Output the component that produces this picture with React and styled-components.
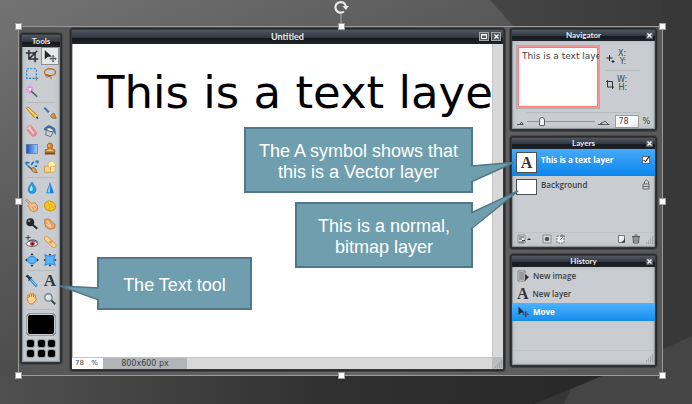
import React from "react";
import styled, { createGlobalStyle, css } from "styled-components";

const GlobalStyle = createGlobalStyle`
  *, *::before, *::after { box-sizing: border-box; }
  body { margin: 0; background: #484848; }
  button, input { font: inherit; color: inherit; margin: 0; padding: 0; border: 0; background: none; border-radius: 0; }
  svg { display: block; }
`;

const Slide = styled.main`
  position: relative;
  min-height: 100vh;
  padding: 26px 29px 28px 18px;
  overflow: hidden;
  background: linear-gradient(155deg, #737373 0%, #585858 35%, #3d3d3d 75%, #303030 100%);
  font-family: "Open Sans", "Noto Sans", sans-serif;
  font-size: 8px;
  line-height: 10px;
  color: #3c3f42;
`;

const Backdrop = styled.svg`
  position: absolute;
  inset: 0;
  width: 100%;
  height: 100%;
`;

const Selection = styled.section`
  position: relative;
  display: flex;
  align-items: flex-start;
  min-height: 350px;
  padding: 1px 5px 3px 0;
  border: 1px solid #9b9b9b;
  background: linear-gradient(90deg, #555, #666 50%, #585858);
`;

const handlePlaces = {
  nw: css`left: -4px; top: -4px;`,
  n: css`left: calc(50% - 3px); top: -4px;`,
  ne: css`right: -4px; top: -4px;`,
  w: css`left: -4px; top: calc(50% - 3px);`,
  e: css`right: -4px; top: calc(50% - 3px);`,
  sw: css`left: -4px; bottom: -4px;`,
  s: css`left: calc(50% - 3px); bottom: -4px;`,
  se: css`right: -4px; bottom: -4px;`,
};

const Handle = styled.span`
  position: absolute;
  width: 7px;
  height: 7px;
  border: 1px solid #a0a0a0;
  background: #fff;
  ${(p) => handlePlaces[p.$place]}
`;

const RotateHandle = styled.svg`
  position: absolute;
  left: calc(50% - 8px);
  top: -28px;
`;

const Panel = styled.section`
  display: flex;
  flex-direction: column;
  border: 1px solid #2b2b2d;
  border-radius: 3px;
  padding: 1px;
  background: #37383a;
  box-shadow: 0 0 0 1px #46474a;
`;

const ToolsPanel = styled(Panel)`
  flex: 0 0 42px;
  margin: 5px 8px 0 1px;
`;

const EditorPanel = styled(Panel)`
  flex: 1;
  min-width: 0;
  min-height: 343px;
`;

const SidePanels = styled.aside`
  flex: 0 0 147px;
  min-width: 0;
  display: flex;
  flex-direction: column;
  gap: 5px;
  margin-left: 5px;
`;

const TitleBar = styled.header`
  display: flex;
  align-items: center;
  justify-content: center;
  position: relative;
  height: ${(p) => p.$height || 11}px;
  padding-bottom: 1px;
  flex: none;
  background: linear-gradient(#515861, #30363f 55%, #14181d 60%, #20252b);
`;

const Title = styled.h2`
  margin: 0;
  color: #e8eaec;
  font-family: Lato, "Open Sans", sans-serif;
  font-size: ${(p) => (p.$large ? 9 : 8)}px;
  font-weight: 700;
  line-height: 10px;
`;

const WindowButtons = styled.div`
  position: absolute;
  right: 2px;
  top: 2px;
  display: flex;
  gap: 2px;
`;

const WindowButton = styled.button`
  width: ${(p) => (p.$large ? 10 : 7)}px;
  height: ${(p) => (p.$large ? 9 : 7)}px;
  display: grid;
  place-items: center;
  background: #575b60;
  border: ${(p) => (p.$large ? "1px solid #a0a4a8" : "0")};
`;

const PanelBody = styled.div`
  flex: 1;
  display: flex;
  flex-direction: column;
  border: solid #8f9499;
  border-width: 0 1px 1px;
  background: #c9cdd1;
  box-shadow: inset 0 0 5px #aeb4b9;
`;

const ToolGrid = styled.div`
  display: grid;
  grid-template-columns: 18px 18px;
  grid-auto-rows: 18px;
  justify-content: center;
`;

const ToolButton = styled.button`
  display: grid;
  place-items: center;
  border: ${(p) => (p.$active ? "1px solid #8b8f93" : "0")};
  background: ${(p) => (p.$active ? "#e6e8ea" : "transparent")};
`;

const Divider = styled.hr`
  width: 80%;
  height: 1px;
  margin: 1px auto;
  border: 0;
  flex: none;
  background: #b7bbbf;
`;

const MainSwatch = styled.button`
  height: 23px;
  margin: 2px 3px 3px;
  border: 1px solid #999da1;
  border-radius: 4px;
  background: #000;
  box-shadow: inset 0 0 0 1px #c9cdd1;
`;

const SwatchGrid = styled.div`
  display: grid;
  grid-template-columns: repeat(3, 9px);
  grid-auto-rows: 9px;
  justify-content: space-between;
  row-gap: 1px;
  margin: 0 3px 3px;
`;

const Swatch = styled.button`
  border: 1px solid #9da1a5;
  border-radius: 3px;
  background: #000;
`;

const EditorBody = styled.div`
  flex: 1;
  display: grid;
  grid-template-columns: minmax(0, 1fr) 11px;
  grid-template-rows: minmax(0, 1fr) 12px;
  background: #d8d8d8;
`;

const Canvas = styled.div`
  overflow: hidden;
  padding: 21px 0 0 24px;
  background: #fff;
  border-left: 1px solid #b9b9b9;
  color: #000;
  font-family: "DejaVu Sans", Verdana, sans-serif;
  font-size: 45px;
  line-height: 56px;
  white-space: nowrap;
`;

const ScrollTrack = styled.div`
  border-left: 1px solid #c5c5c5;
`;

const StatusBar = styled.footer`
  display: flex;
  align-items: stretch;
  border-top: 1px solid #c4c4c4;
  font-family: "DejaVu Sans", sans-serif;
  font-size: 7px;
  line-height: 11px;
`;

const ZoomStatus = styled.label`
  width: 31px;
  display: flex;
  justify-content: space-between;
  padding: 0 5px 0 3px;
  background: #fff;
`;

const ZoomInput = styled.input`
  width: 13px;
`;

const SizeStatus = styled.span`
  width: 84px;
  text-align: center;
  font-size: 8px;
  background: #b2b5b8;
`;

const GripCorner = styled.div`
  display: flex;
  align-items: flex-end;
  justify-content: flex-end;
  background: #babdbf;
`;

const NavTop = styled.div`
  display: flex;
  gap: 6px;
  padding: 4px 14px 2px 3px;
`;

const NavPreview = styled.div`
  width: 84px;
  height: 64px;
  flex: none;
  overflow: hidden;
  border: 1px solid #a9adb0;
  background: #fff;
  box-shadow: inset 0 0 0 1px #f99a9a, inset 0 0 0 2px #f77;
  padding: 4px 0 0 5px;
  font-family: "DejaVu Sans", Verdana, sans-serif;
  font-size: 9px;
  line-height: 12px;
  white-space: nowrap;
`;

const PreviewText = styled.div`
  overflow: hidden;
`;

const Readouts = styled.div`
  flex: 1;
  padding-top: 5px;
`;

const Readout = styled.div`
  display: flex;
  align-items: center;
  gap: 3px;
  font-family: "DejaVu Sans", sans-serif;
  font-size: 8px;
  line-height: 8px;
  text-align: right;
`;

const ReadoutDivider = styled(Divider)`
  width: 100%;
  margin: 4px 0 5px;
`;

const NavZoom = styled.div`
  display: flex;
  align-items: center;
  gap: 3px;
  padding: 1px 4px 0;
  font-family: "DejaVu Sans", sans-serif;
`;

const Range = styled.input`
  appearance: none;
  flex: 1;
  min-width: 0;
  height: 12px;
  background: linear-gradient(#8f9497, #8f9497) center / 100% 1px no-repeat;
  &::-webkit-slider-thumb {
    appearance: none;
    width: 6px;
    height: 9px;
    border: 1px solid #5d6165;
    border-radius: 3px 3px 1px 1px;
    background: #eceeef;
  }
`;

const PercentInput = styled.input`
  width: 24px;
  height: 13px;
  margin-left: 2px;
  padding-left: 2px;
  border: 1px solid #989ca0;
  background: linear-gradient(135deg, #fff 50%, #e8e8e8);
`;

const LayerRow = styled.div`
  display: flex;
  align-items: ${(p) => (p.$active ? "center" : "flex-start")};
  gap: 4px;
  min-height: 27px;
  padding: ${(p) => (p.$active ? "0 5px 0 4px" : "3px 5px 0 4px")};
  margin: 0 -1px;
  font-weight: ${(p) => (p.$active ? 700 : 600)};
  ${(p) => p.$active && css`
    background: linear-gradient(#46aafa, #0a86ec);
    color: #fff;
  `}
`;

const LayerThumb = styled.span`
  width: 21px;
  height: ${(p) => (p.$tall ? 21 : 16)}px;
  display: grid;
  place-items: center;
  border: 1px solid #4d5256;
  background: #fff;
  color: #333;
  font: 700 16px/18px "Liberation Serif", serif;
`;

const LayerName = styled.button`
  flex: 1;
  text-align: left;
  height: ${(p) => (p.$tall ? 18 : 12)}px;
  line-height: 10px;
  padding-bottom: ${(p) => (p.$tall ? 5 : 0)}px;
`;

const VisibleBox = styled.input`
  appearance: none;
  width: 8px;
  height: 8px;
  border: 1px solid #666;
  background: #fff;
  margin-bottom: 5px;
  display: grid;
  place-items: center;
  &:checked::after {
    content: "";
    width: 3px;
    height: 7px;
    border: solid #111;
    border-width: 0 1px 1px 0;
    transform: rotate(35deg);
    margin: -4px 0 0 1px;
  }
`;

const PanelFooter = styled.footer`
  margin-top: auto;
  display: flex;
  align-items: flex-end;
  gap: 4px;
  height: 14px;
  padding: 0 0 1px 4px;
  border-top: 1px solid #bfc3c6;
`;

const Spacer = styled.span`
  flex: 1;
`;

const IconButton = styled.button`
  width: ${(p) => (p.$wide ? 15 : 10)}px;
  height: 12px;
  margin-right: ${(p) => (p.$gap ? 6 : 0)}px;
`;

const HistoryRow = styled.button`
  display: flex;
  align-items: center;
  gap: 4px;
  min-height: 18px;
  margin: 0 -1px;
  padding-left: 5px;
  text-align: left;
  font-weight: ${(p) => (p.$active ? 700 : 600)};
  ${(p) => p.$active && css`
    background: linear-gradient(#4db2ff, #168dec);
    color: #fff;
  `}
`;

const callouts = {
  vector: css`left: 244px; top: 127px; width: 229px; height: 66px;`,
  bitmap: css`left: 295px; top: 202px; width: 178px; height: 66px;`,
  tool: css`left: 97px; top: 257px; width: 155px; height: 53px;`,
};

const Callout = styled.p`
  position: absolute;
  display: grid;
  place-items: center;
  margin: 0;
  padding-top: 3px;
  border: 2px solid #50788a;
  background: #6f9fae;
  color: #fff;
  font: 18px/21px "Liberation Sans", Arial, sans-serif;
  text-align: center;
  ${(p) => callouts[p.$place]}
`;

const tails = {
  vector: css`left: 100%; top: 12px;`,
  bitmap: css`left: 100%; top: -14px;`,
  tool: css`right: 100%; top: 26px;`,
};

const Tail = styled.svg`
  position: absolute;
  overflow: visible;
  ${(p) => tails[p.$place]}
`;

const MoveGlyph = () => (
  <>
    <path d="M2 1v11l3.300-3 4.700-.4z" fill="#26292c" />
    <path d="M11.5 7.5v7M8 11h7M10.3 8.7l1.2-1.3 1.2 1.3M10.3 13.3l1.2 1.3 1.2-1.3M9.2 9.8L8 11l1.2 1.2M13.8 9.8L15 11l-1.2 1.2" fill="none" stroke="#33373a" />
  </>
);

const hand = "M3 3.5c1-.8 2 .3 2.5 2V2.6c.1-1.4 1.8-1.4 2 0v2.5l.5-3c.3-1.2 1.9-.9 1.8.3L9.7 5.6l1-2c.6-1 1.9-.4 1.6.6l-.9 3c1.5-.8 2.6.1 1.8 1L10 12.5c-1.5 2-5.300 1.700-6.200-.8L2.300 7.300c-.4-1.200 1.200-1.600 1.700-.4z";
const point = "M1 2C.5 .5 2.500 .3 3.500 1.500L7 5l4-1 3.500 4-.5 5-4 1.500-4-1.500-1-3.500L3 8l2-2z";

const glyphs = {
  Crop: <path d="M4.500 1v10.500H15M1 4.500h10.500V15M4 12L14 2" fill="none" stroke="#2d3033" strokeWidth="1.800" />,
  Move: <MoveGlyph />,
  Marquee: <><rect x="2" y="2" width="11" height="11" fill="none" stroke="#1688dc" strokeWidth="1.300" strokeDasharray="2.500 1.500" /><path d="M13 11v4.500M10.800 13.200h4.500" stroke="#777" /></>,
  Lasso: <><ellipse cx="8" cy="6" rx="6.300" ry="4" fill="none" stroke="#bf6d19" strokeWidth="1.600" /><path d="M4 8.500c-2 2 .5 4 2.400 2.500 1.500-1.200-.8-3-2.400-1.500M6.500 11c2 0 3 1 3 3" fill="none" stroke="#a85c15" /></>,
  Wand: <><circle cx="5.500" cy="5" r="4.300" fill="#e7a6e2" opacity=".8" /><path d="M5.500 1v8M1.500 5h8M3 2.500l5 5M8 2.500l-5 5" stroke="#dc72d4" /><circle cx="5.500" cy="5" r="1.500" fill="#fff" /><path d="M7 7l7 6.500" stroke="#55595d" strokeWidth="1.700" /></>,
  Pencil: <><path d="M1.500 2.500l2-1.500L13.500 10l1 4-4-1z" fill="#f3a91d" stroke="#9b6714" strokeWidth=".7" /><path d="M3 2.500l9.500 9" stroke="#ffe077" strokeWidth="1.300" /><path d="M10.500 13l3-3 1 4z" fill="#eed6a0" /><path d="M13 12.500l1.800 1.800" stroke="#222" strokeWidth="1.400" /></>,
  Brush: <><path d="M1.500 2l8 8" stroke="#3c78b5" strokeWidth="2.500" /><path d="M7 7l3 3" stroke="#d5d9dc" strokeWidth="3.500" /><path d="M8.500 11l3-3c2.500.5 2.500 4 3.500 6-3 .5-6-.5-6.500-3z" fill="#d49539" stroke="#76511c" strokeWidth=".7" /></>,
  Eraser: <><path d="M2.500 3.500l4-2.500 7 9.500-1.500 3-3.500 .5-7-8z" fill="#ef8b98" stroke="#cf6573" strokeWidth=".6" /><path d="M4 3.500l6 7.500" stroke="#fcd2d6" strokeWidth="2" /><path d="M2 6l5-4" stroke="#f8bfc5" strokeWidth="1.800" /></>,
  Bucket: <><path d="M1 7C1 2 10 .5 14 5.500l.8 6.500c-2 0-2-4-3.800-5" fill="#2679c9" /><path d="M4 6l8 2-3 6.500-6-2z" fill="#c9ced2" stroke="#4c5257" strokeWidth=".8" /><ellipse cx="8" cy="6.500" rx="4.200" ry="1.900" transform="rotate(18 8 6.500)" fill="#eef0f1" stroke="#4c5257" /><path d="M5 5C4 1 9 0 10 5" fill="none" stroke="#555" /></>,
  Gradient: <rect x="1.500" y="3" width="13" height="10" fill="url(#blueFade)" stroke="#4169a0" strokeWidth=".7" />,
  Stamp: <><path d="M6 8L5 5c-.5-5 6.500-5 6 0l-1 3 3.500 1v3h-11V9z" fill="#d9872b" stroke="#87501a" strokeWidth=".8" /><path d="M2 12.500h12v1.800H2z" fill="#814b17" /><path d="M7 2.500l-.3 3M5 9.500h6" stroke="#f8c36f" strokeWidth="1.300" /></>,
  Replace: <><path d="M2.500 6l6 5" stroke="#59636c" strokeWidth="1.800" /><path d="M7 10l2-1.500c4 .5 3.500 3.500 5 6-4 0-6-1-7-4.500z" fill="#d5a252" stroke="#604626" strokeWidth=".7" /><path d="M1.500 5.500V3H5M7 5.500L10 2M12 1.500h2.500V4M11 7h3" fill="none" stroke="#1676ca" strokeWidth="2" /></>,
  Shapes: <><rect x="1.500" y="7" width="7.500" height="7" rx="1" fill="#ffd276" stroke="#ba8435" strokeWidth=".8" /><circle cx="10" cy="5.500" r="4.300" fill="#fff0b8" stroke="#d9a347" strokeWidth=".8" /><path d="M8.500 7.500H14v5l-2.500 1.500h-3z" fill="#ffe5a4" stroke="#c89339" strokeWidth=".6" /></>,
  Blur: <><path d="M8 1c2 3.500 4.500 5.500 4.500 8.800a4.500 4.500 0 01-9 0C3.500 6.500 6 4.500 8 1z" fill="#239cf0" stroke="#126fb5" strokeWidth=".6" /><path d="M7.500 5L5.500 9c0 3 3 3 3.500 0z" fill="#baf0ff" /></>,
  Sharpen: <><path d="M8 1l4.500 13h-9z" fill="#1880db" /><path d="M8 3v10H5z" fill="#79d8ff" /></>,
  Smudge: <><path d={point} fill="#f3bd8b" stroke="#b37235" strokeWidth=".8" /><path d="M8 9l2 3M11 8l2 3" stroke="#bd793d" strokeWidth=".8" /></>,
  Sponge: <><path d="M2 5l4-3 5 1 3.500 4-1 5-5 2-5-2-2-4z" fill="#f5bb18" stroke="#c28c09" strokeWidth=".9" /><path d="M4 6h1M7 4h1M8 8h1M11 6h1M5 9h1M10 11h1" stroke="#ffe575" strokeWidth="1.500" /></>,
  Dodge: <><path d="M8.500 8.500l5.500 5" stroke="#25282a" strokeWidth="2.200" /><circle cx="6" cy="6" r="4.500" fill="#25282a" /><circle cx="4.700" cy="4.400" r="1.500" fill="#83878a" /></>,
  Burn: <><path d="M2 3l4-1 3 2 5 5-1 4-6 1-4-3-1-4z" fill="#e5a366" stroke="#a76a32" strokeWidth=".8" /><path d="M4 4l5 6M4 8l5 4" stroke="#f6ce9e" strokeWidth="1.400" /></>,
  "Red eye": <><path d="M1 10c3-4.500 10-4.500 14 0-3 4-11 4-14 0z" fill="#fff" stroke="#444" /><circle cx="8.500" cy="10" r="2.800" fill="#d43c4e" /><circle cx="8.500" cy="10" r="1.200" fill="#351018" /><path d="M3.500 0v6M.5 3h6M4 7c4-2 8-2 11 1.500" fill="none" stroke="#36393c" /></>,
  "Spot heal": <><path d="M4 4l8.500 8" stroke="#d58a38" strokeWidth="5.500" strokeLinecap="round" /><path d="M4 4l8.500 8" stroke="#ffd28b" strokeWidth="4.200" strokeLinecap="round" /><path d="M7 8l3-1-1 3" fill="none" stroke="#d99c50" strokeWidth="1.600" /></>,
  Bloat: <><path d="M8 0l2 2.500H6zM8 16l2-2.500H6zM0 8l2.500-2v4zM16 8l-2.500-2v4z" fill="#30373e" /><ellipse cx="8" cy="8" rx="5" ry="4" fill="#59b7ff" stroke="#1779d0" strokeWidth=".9" /></>,
  Pinch: <><path d="M2 2c4 2 8 2 12 0-2 4-2 8 0 12-4-2-8-2-12 0 2-4 2-8 0-12z" fill="#59b7ff" stroke="#1779d0" /><path d="M8 3.500L6.500 1h3zM8 12.500L6.500 15h3zM3.500 8L1 6.500v3zM12.500 8L15 6.500v3z" fill="#30373e" /></>,
  "Color picker": <><path d="M5.500 5.500l8 8.500" stroke="#2386cb" strokeWidth="3" /><path d="M6 6l7 7" stroke="#8cd4f5" strokeWidth="1.200" /><path d="M1.500 2.500l1.500-1 3 3 1.500-1L4 7.500l1-1.800z" fill="#263b50" stroke="#263b50" strokeWidth="1.300" /></>,
  Hand: <path d={hand} fill="#ffd296" stroke="#cc761c" strokeWidth="1" />,
  Zoom: <><path d="M9 9l5 5" stroke="#44484b" strokeWidth="2.300" /><circle cx="6.200" cy="6.200" r="4.200" fill="#dce4e8" stroke="#787e83" strokeWidth="1.500" /><path d="M4 6c0-1.500 1-2 2-2" fill="none" stroke="#fff" /></>,
};

const LetterIcon = styled.span`
  color: #33373a;
  font: 700 ${(p) => p.$size || 17}px/16px "Liberation Serif", serif;
`;

const Glyph = ({ name, size = 14 }) => (
  <svg width={size} height={size} viewBox="0 0 16 16" aria-hidden="true">{glyphs[name]}</svg>
);

const toolGroups = [
  ["Crop", "Move", "Marquee", "Lasso", "Wand"],
  ["Pencil", "Brush", "Eraser", "Bucket", "Gradient", "Stamp", "Replace", "Shapes"],
  ["Blur", "Sharpen", "Smudge", "Sponge", "Dodge", "Burn", "Red eye", "Spot heal", "Bloat", "Pinch"],
  ["Color picker", "Type", "Hand", "Zoom"],
];

const CloseMark = () => (
  <svg width="7" height="7" viewBox="0 0 7 7"><path d="M1.500 1.500l4 4M5.500 1.500l-4 4" stroke="#fff" strokeWidth="1.300" /></svg>
);

const Grip = () => (
  <svg width="9" height="9" viewBox="0 0 9 9" aria-hidden="true">
    <path d="M7 1h1M5 3h1M7 3h1M3 5h1M5 5h1M7 5h1M1 7h1M3 7h1M5 7h1M7 7h1" stroke="#7f8387" />
  </svg>
);

function PanelTitle({ children }) {
  return (
    <TitleBar>
      <Title>{children}</Title>
      <WindowButtons><WindowButton aria-label={`Close ${children}`}><CloseMark /></WindowButton></WindowButtons>
    </TitleBar>
  );
}

function Tools() {
  return (
    <ToolsPanel>
      <TitleBar $height={12}><Title>Tools</Title></TitleBar>
      <PanelBody>
        {toolGroups.map((group) => (
          <React.Fragment key={group[0]}>
            <ToolGrid>
              {group.map((name) => (
                <ToolButton key={name} aria-label={name} $active={name === "Move"}>
                  {name === "Type" ? <LetterIcon>A</LetterIcon> : <Glyph name={name} />}
                </ToolButton>
              ))}
            </ToolGrid>
            <Divider />
          </React.Fragment>
        ))}
        <MainSwatch aria-label="Main color" />
        <SwatchGrid>
          {[1, 2, 3, 4, 5, 6].map((n) => <Swatch key={n} aria-label={`Color ${n}`} />)}
        </SwatchGrid>
      </PanelBody>
    </ToolsPanel>
  );
}

function Editor() {
  return (
    <EditorPanel>
      <TitleBar $height={14}>
        <Title $large>Untitled</Title>
        <WindowButtons>
          <WindowButton $large aria-label="Maximize">
            <svg width="8" height="7" viewBox="0 0 8 7"><path d="M1.500 1.500h5v4h-5zM1 2h6" fill="none" stroke="#fff" /></svg>
          </WindowButton>
          <WindowButton $large aria-label="Close"><CloseMark /></WindowButton>
        </WindowButtons>
      </TitleBar>
      <EditorBody>
        <Canvas>This is a text layer</Canvas>
        <ScrollTrack />
        <StatusBar>
          <ZoomStatus><ZoomInput aria-label="Canvas zoom" defaultValue="78" />%</ZoomStatus>
          <SizeStatus>800x600 px</SizeStatus>
        </StatusBar>
        <GripCorner><Grip /></GripCorner>
      </EditorBody>
    </EditorPanel>
  );
}

function Navigator() {
  return (
    <Panel>
      <PanelTitle>Navigator</PanelTitle>
      <PanelBody>
        <NavTop>
          <NavPreview><PreviewText>This is a text layer</PreviewText></NavPreview>
          <Readouts>
            <Readout>
              <svg width="9" height="9" viewBox="0 0 9 9"><path d="M3.500 1v6M.5 4h6M7 6v3M5.500 7.500h3" stroke="#222" /></svg>
              <div>X:<br />Y:</div>
            </Readout>
            <ReadoutDivider />
            <Readout>
              <svg width="8" height="9" viewBox="0 0 8 9"><path d="M1.500 0v7H8M0 1.500h6.500V9" fill="none" stroke="#333" /></svg>
              <div>W:<br />H:</div>
            </Readout>
          </Readouts>
        </NavTop>
        <Divider />
        <NavZoom>
          <svg width="7" height="8" viewBox="0 0 7 8"><path d="M0 6.500h6.500M3 6l1.500-2L6 6" fill="none" stroke="#555" /></svg>
          <Range type="range" aria-label="Zoom" min="0" max="100" defaultValue="20" />
          <svg width="12" height="8" viewBox="0 0 12 8"><path d="M0 6.500h11.500M3 6l4-3 3 3M2 6l2-1.500" fill="none" stroke="#555" /></svg>
          <PercentInput aria-label="Zoom percent" defaultValue="78" />%
        </NavZoom>
      </PanelBody>
    </Panel>
  );
}

const ListPanel = styled(Panel)`
  min-height: 113px;
`;

function Layers() {
  return (
    <ListPanel>
      <PanelTitle>Layers</PanelTitle>
      <PanelBody>
        <LayerRow $active>
          <LayerThumb $tall>A</LayerThumb>
          <LayerName $tall>This is a text layer</LayerName>
          <VisibleBox type="checkbox" aria-label="Show text layer" defaultChecked />
        </LayerRow>
        <LayerRow>
          <LayerThumb />
          <LayerName>Background</LayerName>
          <svg width="8" height="11" viewBox="0 0 8 11"><path d="M2.500 5V2.500Q4.500-.5 6.500 2.500V5M1 5h6v5H1zM1 7.500h6" fill="#d5d8da" stroke="#666" /></svg>
        </LayerRow>
        <PanelFooter>
          <IconButton $wide $gap aria-label="Layer settings">
            <svg width="15" height="12" viewBox="0 0 15 12"><path d="M1 2h7v8H1z" fill="#eee" stroke="#888" /><path d="M2 4h5M2 6h3M5 7.500h3M2 9h5" stroke="#444" /><path d="M10 7l2-2 2 2z" fill="#333" /></svg>
          </IconButton>
          <IconButton aria-label="Add mask">
            <svg width="10" height="12" viewBox="0 0 10 12"><path d="M1 2h8v8H1z" fill="#ddd" stroke="#888" /><circle cx="5" cy="6" r="2.300" fill="#555" /></svg>
          </IconButton>
          <IconButton aria-label="Layer styles">
            <svg width="10" height="12" viewBox="0 0 10 12"><path d="M1 3h7v7H1z" fill="#eee" stroke="#777" strokeDasharray="2 1" /><path d="M4 7l4-4M6 1v3M4 3h5" stroke="#777" /></svg>
          </IconButton>
          <Spacer />
          <IconButton aria-label="New layer">
            <svg width="10" height="12" viewBox="0 0 10 12"><path d="M1.500 2.500h6v7h-6z" fill="#eee" stroke="#777" /><path d="M3 9.500h5V5L6 8z" fill="#444" /></svg>
          </IconButton>
          <IconButton aria-label="Delete layer">
            <svg width="10" height="12" viewBox="0 0 10 12"><path d="M2 4h6l-.5 6h-5zM1 3.500h8M3.500 2h3M4 5v4M6 5v4" fill="none" stroke="#555" /></svg>
          </IconButton>
          <Grip />
        </PanelFooter>
      </PanelBody>
    </ListPanel>
  );
}

function History() {
  return (
    <ListPanel>
      <PanelTitle>History</PanelTitle>
      <PanelBody>
        <HistoryRow>
          <svg width="12" height="12" viewBox="0 0 12 12"><path d="M1 1h7v10H1z" fill="#f2f2f2" stroke="#777" /><path d="M2 3h5M2 5h5M2 7h5M2 9h5" stroke="#444" /><path d="M8 4l4 3-4 4z" fill="#333" /></svg>
          New image
        </HistoryRow>
        <HistoryRow><LetterIcon $size={16}>A</LetterIcon>New layer</HistoryRow>
        <HistoryRow $active><Glyph name="Move" size={12} />Move</HistoryRow>
        <PanelFooter><Spacer /><Grip /></PanelFooter>
      </PanelBody>
    </ListPanel>
  );
}

export default function App() {
  return (
    <>
      <GlobalStyle />
      <Slide>
        <Backdrop viewBox="0 0 692 404" preserveAspectRatio="none" aria-hidden="true">
          <defs>
            <linearGradient id="blueFade"><stop stopColor="#124fc5" /><stop offset="1" stopColor="#a9d2ff" /></linearGradient>
            <linearGradient id="slideShade"><stop stopColor="#454545" /><stop offset="1" stopColor="#383838" /></linearGradient>
            <linearGradient id="lowShade"><stop stopColor="#505050" /><stop offset=".55" stopColor="#303030" /><stop offset="1" stopColor="#282828" /></linearGradient>
          </defs>
          <path d="M490 0L514 27L692 240V0z" fill="url(#slideShade)" />
          <path d="M662 200V349L692 336V0h-30z" fill="#383838" />
          <path d="M0 376H602L535 404H0z" fill="url(#lowShade)" />
          <path d="M535 404L602 376L692 336V404z" fill="#454545" />
          <path d="M576 376Q571 391 563 404H535L571 389z" fill="#363636" />
        </Backdrop>
        <Selection>
          <Tools />
          <Editor />
          <SidePanels>
            <Navigator />
            <Layers />
            <History />
          </SidePanels>
          {Object.keys(handlePlaces).map((place) => <Handle key={place} $place={place} />)}
          <RotateHandle width="16" height="26" viewBox="0 0 16 26" aria-hidden="true">
            <path d="M8 14v11" stroke="#aaa" />
            <path d="M11 12.500A5.300 5.300 0 1112.800 7" fill="none" stroke="#e9e9e9" strokeWidth="2.200" />
            <path d="M9.500 7H16l-3.200 4z" fill="#e9e9e9" />
          </RotateHandle>
        </Selection>
        <Callout $place="vector">
          <span>The A symbol shows that<br />this is a Vector layer</span>
          <Tail $place="vector" width="44" height="44" viewBox="0 0 44 44" aria-hidden="true">
            <path d="M-2 25L44 21L-2 42" fill="#6f9fae" /><path d="M0 25L43 21.500L0 41" fill="none" stroke="#50788a" strokeWidth="1.500" />
          </Tail>
        </Callout>
        <Callout $place="bitmap">
          <span>This is a normal,<br />bitmap layer</span>
          <Tail $place="bitmap" width="47" height="40" viewBox="0 0 47 40" aria-hidden="true">
            <path d="M-2 24L47 1L-2 40" fill="#6f9fae" /><path d="M0 23L47 1L0 39" fill="none" stroke="#50788a" strokeWidth="1.500" />
          </Tail>
        </Callout>
        <Callout $place="tool">
          <span>The Text tool</span>
          <Tail $place="tool" width="39" height="16" viewBox="0 0 39 16" aria-hidden="true">
            <path d="M41 3L0 1L41 15" fill="#6f9fae" /><path d="M39 3L0 1L39 15" fill="none" stroke="#50788a" strokeWidth="1.500" />
          </Tail>
        </Callout>
      </Slide>
    </>
  );
}
